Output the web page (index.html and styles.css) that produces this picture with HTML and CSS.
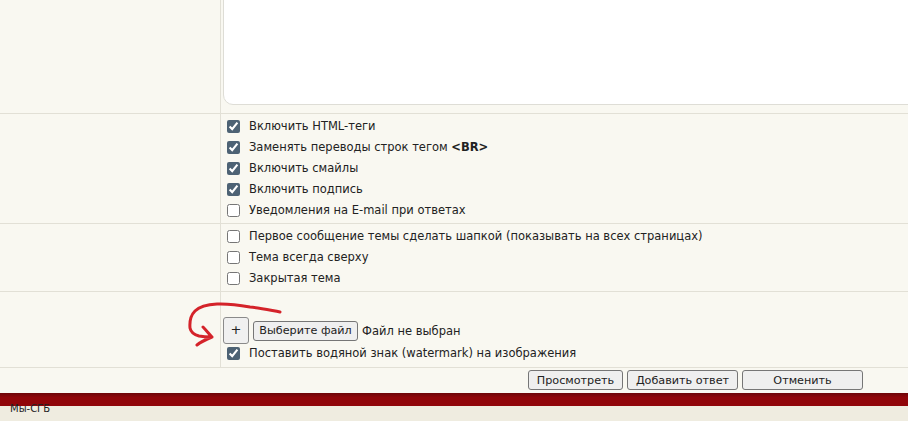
FILE: index.html
```html
<!DOCTYPE html>
<html lang="ru">
<head>
<meta charset="utf-8">
<title>Ответ</title>
<link rel="stylesheet" href="styles.css">
</head>
<body>
<main class="form">
  <section class="row row-text">
    <div class="label"></div>
    <div class="field field-text"><div class="textarea"></div></div>
  </section>
  <section class="row row-options">
    <div class="label"></div>
    <div class="field checks">
      <label class="check"><input type="checkbox" checked>Включить HTML-теги</label>
      <label class="check"><input type="checkbox" checked><span>Заменять переводы строк тегом <b>&lt;BR&gt;</b></span></label>
      <label class="check"><input type="checkbox" checked>Включить смайлы</label>
      <label class="check"><input type="checkbox" checked>Включить подпись</label>
      <label class="check"><input type="checkbox">Уведомления на E-mail при ответах</label>
    </div>
  </section>
  <section class="row row-topic">
    <div class="label"></div>
    <div class="field checks">
      <label class="check"><input type="checkbox">Первое сообщение темы сделать шапкой (показывать на всех страницах)</label>
      <label class="check"><input type="checkbox">Тема всегда сверху</label>
      <label class="check"><input type="checkbox">Закрытая тема</label>
    </div>
  </section>
  <section class="row row-upload">
    <div class="label"></div>
    <div class="field upload">
      <div class="file-line">
        <svg class="arrow" width="100" height="50" viewBox="0 0 100 50" aria-hidden="true"><path d="M95 12C84 10 75 8 65 7C54 5 44 3.500 32 4C22 4.500 14 7 10 11C6 15 4.500 22 5 28C6 33 10 35 14 36C19 37 23 37 27 37M18 27C21 30 24 34 27 37C22 39 17 41 12 45" /></svg>
        <button class="add" type="button">+</button>
        <button class="btn pick" type="button">Выберите файл</button>
        <span class="no-file">Файл не выбран</span>
      </div>
      <label class="check"><input type="checkbox" checked>Поставить водяной знак (watermark) на изображения</label>
    </div>
  </section>
  <div class="actions">
    <button type="button" class="btn btn-preview">Просмотреть</button>
    <button type="button" class="btn btn-submit">Добавить ответ</button>
    <button type="button" class="btn btn-wide">Отменить</button>
  </div>
</main>
<div class="bar"></div>
<footer class="footer">Мы-СГБ</footer>
</body>
</html>
```
FILE: styles.css
```css
* { box-sizing: border-box; }
html, body { margin: 0; height: 421px; overflow: hidden; }
body {
  background: #f9f8f1;
  color: #222;
  font: 11.5px/21px "DejaVu Sans", Verdana, sans-serif;
}
.row {
  display: grid;
  grid-template-columns: 221px 1fr;
  border-bottom: 1px solid #e2e0d6;
}
.label { border-right: 1px solid #e2e0d6; }
.row-text { height: 114px; }
.row-options { height: 110px; }
.row-topic { height: 68px; }
.row-upload { height: 76px; }
.field { padding-left: 6px; min-width: 0; }
.field-text { padding-left: 2px; overflow: hidden; }
.textarea {
  height: 115px;
  margin: -10px -20px 0 0;
  background: #fff;
  border: 1px solid #deddd6;
  border-radius: 10px;
}
.checks { padding-top: 2px; }
.check { display: flex; align-items: center; height: 21px; }
.check input {
  width: 13px;
  height: 13px;
  margin: 0 9px 0 0;
  accent-color: #4d6274;
  flex: none;
}
.upload { padding-top: 25px; }
.file-line {
  position: relative;
  display: flex;
  align-items: center;
  gap: 4px;
  height: 27px;
  margin: 0 0 -1px -4px;
}
.arrow {
  position: absolute;
  left: -38px;
  top: -17px;
  fill: none;
  stroke: #d4232a;
  stroke-width: 3;
  stroke-linecap: round;
  stroke-linejoin: round;
}
.add {
  width: 26px;
  height: 27px;
  padding: 0 0 3px;
  font: 13px "DejaVu Sans", sans-serif;
  color: #222;
  background: #f0f0f0;
  border: 1px solid #8a8a8a;
  border-radius: 3px;
}
.pick { width: 105px; height: 19px; }
.no-file { color: #222; padding-top: 1px; }
.actions {
  display: flex;
  justify-content: flex-end;
  gap: 4px;
  height: 25px;
  padding: 2px 45px 0 0;
}
.btn {
  height: 20px;
  padding: 0;
  font: 11.2px "DejaVu Sans", sans-serif;
  white-space: nowrap;
  color: #222;
  background: #efefef;
  border: 1px solid #767676;
  border-radius: 3px;
}
.btn-preview { width: 95px; }
.btn-submit { width: 111px; }
.btn-wide { width: 121px; }
.bar {
  height: 13px;
  background: linear-gradient(#6d0508, #900509 35%, #900509);
}
.footer {
  height: 15px;
  padding-left: 10px;
  background: #efece0;
  font-size: 10px;
  line-height: 5px;
  color: #222;
}
```
